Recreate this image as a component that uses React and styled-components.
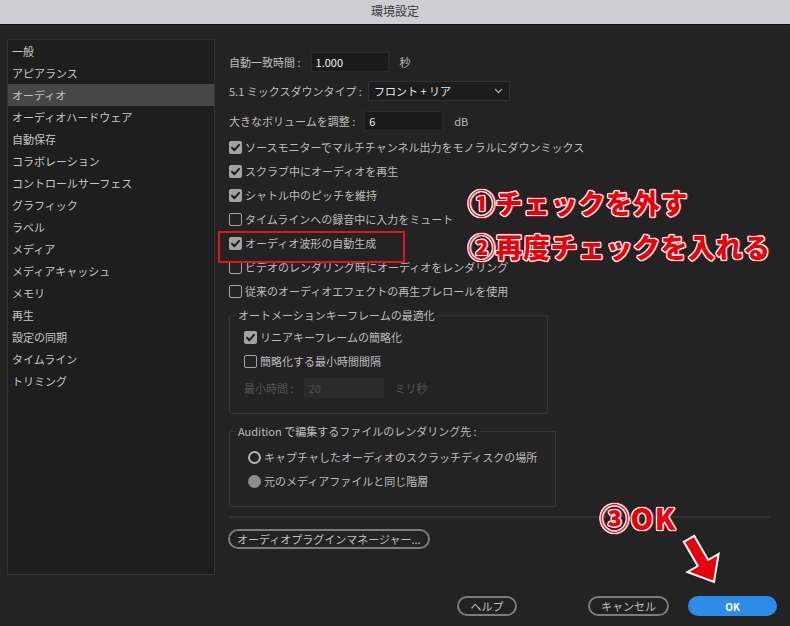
import React from "react";
import styled, { createGlobalStyle } from "styled-components";

const GlobalStyle = createGlobalStyle`
  html, body { margin: 0; padding: 0; background: #232323; }
  body { font-family: "Noto Sans CJK JP", "Noto Sans", sans-serif; }
  * { box-sizing: border-box; }
`;

const Window = styled.div`
  position: relative;
  width: 790px;
  height: 626px;
  background: #232323;
  display: flex;
  flex-direction: column;
  overflow: hidden;
  font-family: "Noto Sans CJK JP", "Noto Sans", sans-serif;
  font-size: 11px;
`;

const TitleBar = styled.div`
  height: 25px;
  flex: none;
  background: #cecdd2;
  border-bottom: 1px solid #111;
  display: flex;
  align-items: center;
  justify-content: center;
  color: #3c3c3c;
  font-size: 12px;
  padding-bottom: 3px;
`;

const Main = styled.div`
  display: flex;
  height: 550px;
  padding: 14px 20px 0 7px;
  flex: none;
`;

const Sidebar = styled.div`
  width: 208px;
  height: 536px;
  border: 1px solid #333;
  background: #1e1e1e;
  flex: none;
  display: flex;
  flex-direction: column;
`;

const NavItem = styled.div`
  height: 22px;
  line-height: 22px;
  padding-left: 4px;
  color: ${(p) => (p.$active ? "#c4c4c4" : "#c6c6c6")};
  background: ${(p) => (p.$active ? "#474747" : "transparent")};
  font-size: 11px;
  white-space: nowrap;
`;

const Content = styled.div`
  flex: 1;
  margin-left: 14px;
  padding-top: 13px;
  display: flex;
  flex-direction: column;
`;

const FieldRow = styled.div`
  display: flex;
  align-items: center;
  height: 20px;
  margin-bottom: ${(p) => p.$mb || 0}px;
  margin-top: ${(p) => p.$mt || 0}px;
  color: ${(p) => (p.$disabled ? "#555" : "#bdbdbd")};
`;

const Label = styled.span`
  white-space: nowrap;
  margin-right: ${(p) => p.$gap}px;
`;

const TextInput = styled.div`
  width: ${(p) => p.$w}px;
  height: 20px;
  background: ${(p) => (p.$disabled ? "#2b2b2b" : "#1a1a1a")};
  border: 1px solid ${(p) => (p.$disabled ? "#2b2b2b" : "#2a2a2a")};
  color: ${(p) => (p.$disabled ? "#4e4e4e" : "#f0f0f0")};
  padding-left: 4px;
  line-height: 18px;
  font-size: 11px;
  margin-right: 11px;
`;

const Select = styled.div`
  width: 142px;
  height: 20px;
  background: #1c1c1c;
  border: 1px solid #303030;
  color: #e6e6e6;
  display: flex;
  align-items: center;
  justify-content: space-between;
  padding: 0 6px 0 5px;
  font-size: 11px;
`;

const CheckRow = styled.div`
  display: flex;
  align-items: center;
  height: 24px;
  color: #bdbdbd;
  white-space: nowrap;
`;

const BoxWrap = styled.span`
  width: 13px;
  height: 13px;
  flex: none;
  margin-right: 3px;
  border-radius: 2px;
  background: ${(p) => (p.$checked ? "#a3a3a3" : "transparent")};
  border: ${(p) => (p.$checked ? "none" : "1.5px solid #a3a3a3")};
  display: flex;
  align-items: center;
  justify-content: center;
`;

const Check = ({ checked }) => (
  <BoxWrap $checked={checked}>
    {checked && (
      <svg width="11" height="11" viewBox="0 0 11 11">
        <polyline points="2,5.8 4.4,8.2 9,2.8" fill="none" stroke="#1e1e1e" strokeWidth="2" strokeLinecap="round" strokeLinejoin="round" />
      </svg>
    )}
  </BoxWrap>
);

const Radio = styled.span`
  width: 13px;
  height: 13px;
  flex: none;
  border-radius: 50%;
  margin-right: 3px;
  border: ${(p) => (p.$filled ? "none" : "2px solid #b4b4b4")};
  background: ${(p) => (p.$filled ? "#8e8e8e" : "transparent")};
`;

const Group = styled.fieldset`
  margin: ${(p) => p.$mt}px 0 0 0;
  width: ${(p) => p.$w}px;
  border: 1px solid #353535;
  border-radius: 2px;
  padding: 0;
  min-width: 0;
`;

const GroupBody = styled.div`
  padding: ${(p) => p.$pt}px 0 ${(p) => p.$pb}px ${(p) => p.$pl}px;
  display: flex;
  flex-direction: column;
`;

const Legend = styled.legend`
  margin-left: 6px;
  padding: 0 2px;
  color: #bdbdbd;
  font-size: 11px;
  line-height: 14px;
  white-space: nowrap;
`;

const Separator = styled.div`
  height: 2px;
  background: #303030;
  margin-top: 9px;
  width: 541px;
`;

const PillButton = styled.div`
  height: 20px;
  border-radius: 10px;
  border: 2px solid ${(p) => (p.$primary ? "#2f8be8" : "#7c7c7c")};
  background: ${(p) => (p.$primary ? "#2f8be8" : "transparent")};
  color: ${(p) => (p.$primary ? "#fff" : "#c0c0c0")};
  font-weight: ${(p) => (p.$primary ? 700 : 400)};
  font-size: ${(p) => (p.$primary ? 10 : 11)}px;
  display: flex;
  align-items: center;
  justify-content: center;
  width: ${(p) => (p.$w ? `${p.$w}px` : "auto")};
  padding: ${(p) => (p.$w ? 0 : "0 7px")};
  white-space: nowrap;
`;

const PluginRow = styled.div`
  margin-top: 11px;
  display: flex;
  margin-left: -1px;
`;

const Footer = styled.div`
  display: flex;
  justify-content: flex-end;
  align-items: center;
  padding: 21px 13px 0 0;
`;

const FooterGap = styled.div`
  width: ${(p) => p.$w}px;
`;

const Highlight = styled.div`
  position: absolute;
  left: 218px;
  top: 231px;
  width: 187px;
  height: 32px;
  border: 2px solid #e0141c;
`;

const Note = styled.div`
  position: absolute;
  left: ${(p) => p.$x}px;
  top: ${(p) => p.$y}px;
  font-family: "Noto Sans CJK JP", "Noto Sans", sans-serif;
  font-weight: 900;
  font-size: ${(p) => p.$size || 27}px;
  line-height: 1;
  letter-spacing: ${(p) => p.$ls || 0}px;
  color: #e8000b;
  white-space: nowrap;
  text-shadow:
    1px 0 0 #fff, -1px 0 0 #fff, 0 1px 0 #fff, 0 -1px 0 #fff,
    1px 1px 0 #fff, -1px -1px 0 #fff, 1px -1px 0 #fff, -1px 1px 0 #fff,
    2px 0 0 #d40010, -2px 0 0 #d40010, 0 2px 0 #d40010, 0 -2px 0 #d40010;
`;

const ArrowSvg = styled.svg`
  position: absolute;
  left: 682px;
  top: 528px;
`;

const navItems = [
  "一般",
  "アピアランス",
  "オーディオ",
  "オーディオハードウェア",
  "自動保存",
  "コラボレーション",
  "コントロールサーフェス",
  "グラフィック",
  "ラベル",
  "メディア",
  "メディアキャッシュ",
  "メモリ",
  "再生",
  "設定の同期",
  "タイムライン",
  "トリミング",
];

const checks = [
  ["ソースモニターでマルチチャンネル出力をモノラルにダウンミックス", true],
  ["スクラブ中にオーディオを再生", true],
  ["シャトル中のピッチを維持", true],
  ["タイムラインへの録音中に入力をミュート", false],
  ["オーディオ波形の自動生成", true],
  ["ビデオのレンダリング時にオーディオをレンダリング", false],
  ["従来のオーディオエフェクトの再生プレロールを使用", false],
];

export default function App() {
  return (
    <Window>
      <GlobalStyle />
      <TitleBar>環境設定</TitleBar>
      <Main>
        <Sidebar>
          {navItems.map((n) => (
            <NavItem key={n} $active={n === "オーディオ"}>
              {n}
            </NavItem>
          ))}
        </Sidebar>
        <Content>
          <FieldRow $mb={9}>
            <Label $gap={10}>自動一致時間 :</Label>
            <TextInput $w={78}>1.000</TextInput>
            <span>秒</span>
          </FieldRow>
          <FieldRow $mb={10}>
            <Label $gap={6}>5.1 ミックスダウンタイプ :</Label>
            <Select>
              <span>フロント + リア</span>
              <svg width="9" height="6" viewBox="0 0 9 6">
                <polyline points="1,1 4.5,4.5 8,1" fill="none" stroke="#a0a0a0" strokeWidth="1.3" />
              </svg>
            </Select>
          </FieldRow>
          <FieldRow $mb={4}>
            <Label $gap={9}>大きなボリュームを調整 :</Label>
            <TextInput $w={79}>6</TextInput>
            <span>dB</span>
          </FieldRow>
          {checks.map(([t, c]) => (
            <CheckRow key={t}>
              <Check checked={c} />
              {t}
            </CheckRow>
          ))}
          <Group $mt={5} $w={319}>
            <Legend>オートメーションキーフレームの最適化</Legend>
            <GroupBody $pt={3} $pb={15} $pl={14}>
              <CheckRow>
                <Check checked />
                リニアキーフレームの簡略化
              </CheckRow>
              <CheckRow>
                <Check checked={false} />
                簡略化する最小時間間隔
              </CheckRow>
              <FieldRow $mt={5} $disabled>
                <Label $gap={10}>最小時間 :</Label>
                <TextInput $w={80} $disabled>20</TextInput>
                <span>ミリ秒</span>
              </FieldRow>
            </GroupBody>
          </Group>
          <Group $mt={10} $w={327}>
            <Legend>Audition で編集するファイルのレンダリング先 :</Legend>
            <GroupBody $pt={7} $pb={13} $pl={18}>
              <CheckRow>
                <Radio />
                キャプチャしたオーディオのスクラッチディスクの場所
              </CheckRow>
              <CheckRow>
                <Radio $filled />
                元のメディアファイルと同じ階層
              </CheckRow>
            </GroupBody>
          </Group>
          <Separator />
          <PluginRow>
            <PillButton>オーディオプラグインマネージャー...</PillButton>
          </PluginRow>
        </Content>
      </Main>
      <Footer>
        <PillButton $w={60}>ヘルプ</PillButton>
        <FooterGap $w={71} />
        <PillButton $w={81}>キャンセル</PillButton>
        <FooterGap $w={19} />
        <PillButton $w={89} $primary>OK</PillButton>
      </Footer>

      <Highlight />
      <Note $x={468} $y={189} $ls={0.5}>①チェックを外す</Note>
      <Note $x={468} $y={233} $ls={0.5}>②再度チェックを入れる</Note>
      <Note $x={600} $y={503} $size={29} $ls={1.5}>③OK</Note>
      <ArrowSvg width="48" height="60" viewBox="0 0 48 60">
        <polygon
          points="1.8,13.8 12.2,7.8 26.2,32 36.6,26 32,54 5.4,44 15.8,38"
          fill="#e8000b"
          stroke="#fff"
          strokeWidth="2"
          strokeLinejoin="miter"
        />
      </ArrowSvg>
    </Window>
  );
}
